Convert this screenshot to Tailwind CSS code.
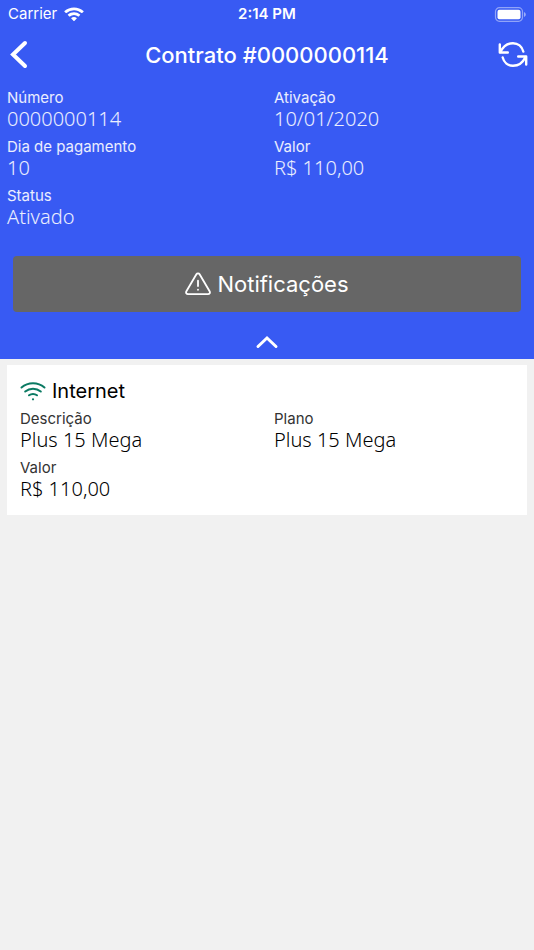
<!DOCTYPE html>
<html lang="pt-BR">

<head>
    <meta charset="UTF-8">
    <meta name="viewport" content="width=device-width, initial-scale=1.0">
    <title>Contrato #0000000114</title>
    <script src="https://cdn.jsdelivr.net/npm/@tailwindcss/browser@4"></script>
</head>

<body class="min-h-screen bg-[#f1f1f1] font-['Inter','Liberation_Sans',sans-serif] text-black">
    <header class="bg-[#385af3] text-white">
        <!-- Status bar -->
        <div class="grid h-7 grid-cols-3 items-center px-2 text-[15px] leading-5">
            <div class="flex items-center gap-[7px]">
                <span>Carrier</span>
                <svg class="h-[15px] w-5" viewBox="0 0 20 15" fill="currentColor">
                    <path d="M10 .4C6.400.4 3 1.700.500 4.100a.4.4 0 0 0 0 .6l1.400 1.400c.2.2.4.2.6 0A10.900 10.900 0 0 1 10 3.200c2.800 0 5.400 1 7.500 2.900.2.2.4.2.6 0l1.400-1.400a.4.4 0 0 0 0-.6C17 1.700 13.600.4 10 .4Z" />
                    <path d="M10 5.200c-2.300 0-4.400.8-6.100 2.300a.4.4 0 0 0 0 .6l1.400 1.400c.2.2.4.2.6 0a6.200 6.200 0 0 1 8.200 0c.2.2.4.2.6 0l1.400-1.400a.4.4 0 0 0 0-.6A9.200 9.200 0 0 0 10 5.200Z" />
                    <path d="M10 10c-1 0-2 .4-2.700 1a.4.4 0 0 0 0 .6l2.400 2.400c.2.2.4.2.6 0l2.400-2.400a.4.4 0 0 0 0-.6c-.7-.6-1.700-1-2.700-1Z" />
                </svg>
            </div>
            <span class="text-center font-semibold">2:14 PM</span>
            <svg class="h-[15px] w-8 justify-self-end" viewBox="0 0 32 15" fill="none">
                <rect x="1.500" y=".7" width="27" height="13.600" rx="4" stroke="white" stroke-opacity=".45" stroke-width="1.200" />
                <rect x="3.500" y="2.700" width="23" height="9.600" rx="2" fill="white" />
                <path d="M30 5v5c1-.4 1.800-1.300 1.800-2.500S31 5.400 30 5Z" fill="white" fill-opacity=".5" />
            </svg>
        </div>

        <!-- Navigation -->
        <nav class="flex h-[54px] items-center justify-between px-1.5">
            <button type="button" aria-label="Voltar" class="w-8">
                <svg class="h-8 w-6" viewBox="0 0 24 32" fill="none" stroke="currentColor" stroke-width="4" stroke-linecap="round">
                    <path d="M19 4 7 15.500 19 27" />
                </svg>
            </button>
            <h1 class="text-[22px] leading-7 font-medium">Contrato #0000000114</h1>
            <button type="button" aria-label="Atualizar" class="flex w-8 justify-end">
                <svg class="h-7 w-[30px]" viewBox="0 0 30 28" fill="none" stroke="currentColor" stroke-width="2.400" stroke-linecap="round" stroke-linejoin="round">
                    <path d="M1.800 3.500v8h8M28.200 23.500v-8h-8" />
                    <path d="M2.500 11C5 5.700 9.500 2.200 15 2.200c5 0 9 3.300 10.300 8.300" />
                    <path d="M27.500 16c-2.500 5.300-7 8.800-12.500 8.800-5 0-9-3.300-10.300-8.300" />
                </svg>
            </button>
        </nav>

        <!-- Contract details -->
        <dl class="grid grid-cols-2 gap-y-[7px] pt-1.5 text-white/90">
            <div class="px-[7px]">
                <dt class="text-[15px] leading-5">Número</dt>
                <dd class="font-['Noto_Sans','Open_Sans',sans-serif] text-xl leading-[22px] font-light">0000000114</dd>
            </div>
            <div class="px-[7px]">
                <dt class="text-[15px] leading-5">Ativação</dt>
                <dd class="font-['Noto_Sans','Open_Sans',sans-serif] text-xl leading-[22px] font-light">10/01/2020</dd>
            </div>
            <div class="px-[7px]">
                <dt class="text-[15px] leading-5">Dia de pagamento</dt>
                <dd class="font-['Noto_Sans','Open_Sans',sans-serif] text-xl leading-[22px] font-light">10</dd>
            </div>
            <div class="px-[7px]">
                <dt class="text-[15px] leading-5">Valor</dt>
                <dd class="font-['Noto_Sans','Open_Sans',sans-serif] text-xl leading-[22px] font-light">R$ 110,00</dd>
            </div>
            <div class="px-[7px]">
                <dt class="text-[15px] leading-5">Status</dt>
                <dd class="font-['Noto_Sans','Open_Sans',sans-serif] text-xl leading-[22px] font-light">Ativado</dd>
            </div>
        </dl>

        <div class="px-[13px] pt-7">
            <button type="button" class="flex h-14 w-full items-center justify-center gap-1.5 rounded bg-[#666] text-[22px] leading-7">
                <svg class="h-6 w-[26px]" viewBox="0 0 26 24" fill="none" stroke="currentColor" stroke-width="1.800" stroke-linejoin="round" stroke-linecap="round">
                    <path d="M11.400 2.200 1.400 19.300c-.8 1.400 0 2.900 1.600 2.900h20c1.600 0 2.400-1.500 1.600-2.900L14.600 2.200c-.7-1.200-2.500-1.200-3.200 0Z" />
                    <path d="M13 8.700v5.300M13 17.600v.2" />
                </svg>
                Notificações
            </button>
        </div>

        <button type="button" aria-label="Recolher" class="flex h-[47px] w-full items-center justify-center pt-3">
            <svg class="h-4 w-6" viewBox="0 0 24 16" fill="none" stroke="currentColor" stroke-width="3" stroke-linecap="round">
                <path d="M3 12.500 12 4l9 8.500" />
            </svg>
        </button>
    </header>

    <main class="px-[7px] py-1.5">
        <section class="bg-white px-1.5 pt-3 pb-[15px]">
            <h2 class="flex items-center gap-1.5 px-[7px] text-xl leading-7">
                <svg class="h-5 w-[26px]" viewBox="0 0 26 20" fill="none" stroke="#0b7a63" stroke-width="2" stroke-linecap="round">
                    <path d="M1.500 6.500C4.700 3.700 8.700 2.200 13 2.200s8.300 1.500 11.500 4.300" />
                    <path d="M5.200 10.500C7.400 8.700 10.100 7.700 13 7.700s5.600 1 7.800 2.800" />
                    <path d="M9 14.300c1.200-.9 2.600-1.400 4-1.400s2.800.5 4 1.400" />
                    <circle cx="13" cy="18.300" r="1.100" fill="#0b7a63" stroke="none" />
                </svg>
                Internet
            </h2>
            <dl class="grid grid-cols-2 gap-y-[7px] pt-1">
                <div class="px-[7px]">
                    <dt class="text-[15px] leading-5 text-[#333]">Descrição</dt>
                    <dd class="font-['Noto_Sans','Open_Sans',sans-serif] text-xl leading-[22px] font-light">Plus 15 Mega</dd>
                </div>
                <div class="px-[7px]">
                    <dt class="text-[15px] leading-5 text-[#333]">Plano</dt>
                    <dd class="font-['Noto_Sans','Open_Sans',sans-serif] text-xl leading-[22px] font-light">Plus 15 Mega</dd>
                </div>
                <div class="px-[7px]">
                    <dt class="text-[15px] leading-5 text-[#333]">Valor</dt>
                    <dd class="font-['Noto_Sans','Open_Sans',sans-serif] text-xl leading-[22px] font-light">R$ 110,00</dd>
                </div>
            </dl>
        </section>
    </main>
</body>

</html>
